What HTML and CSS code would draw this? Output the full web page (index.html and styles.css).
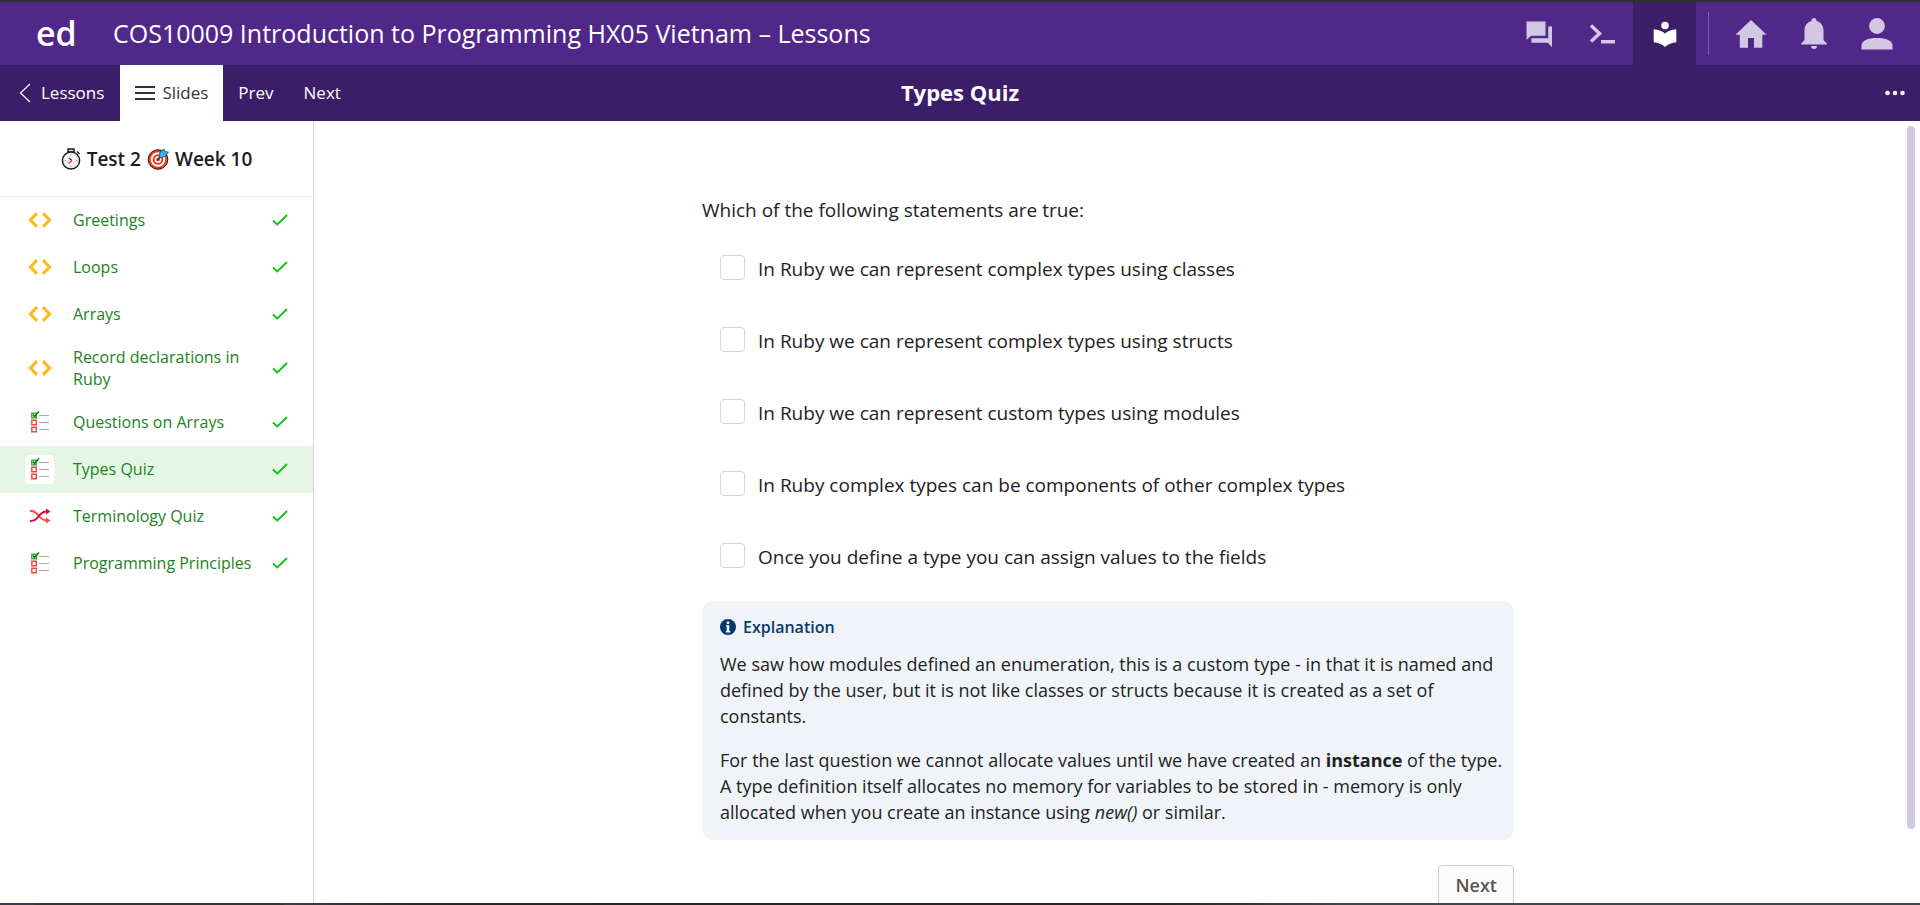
FILE: index.html
```html
<!DOCTYPE html>
<html lang="en">
<head>
<meta charset="utf-8">
<title>COS10009 Introduction to Programming HX05 Vietnam – Lessons</title>
<link rel="stylesheet" href="styles.css">
</head>
<body>
<svg width="0" height="0" class="defs" aria-hidden="true">
  <symbol id="code" viewBox="0 0 24 16"><path d="M9 1.200 2.500 8 9 14.800M15 1.200 21.500 8 15 14.800" fill="none" stroke="#fdbb1d" stroke-width="3.200"/></symbol>
  <symbol id="tick" viewBox="0 0 16 12"><path d="M1 6.500 5.300 10.500 15 1" fill="none" stroke="#0ac40a" stroke-width="1.800"/></symbol>
  <symbol id="quiz" viewBox="0 0 20 24">
    <path d="M1.800 3.300h4.500v4.500H1.800z" fill="none" stroke="#3fae3f" stroke-width="1.500"/>
    <path d="M3 4.500 4.500 6.500 9 1.500" fill="none" stroke="#0b7d12" stroke-width="1.500"/>
    <path d="M1.800 10.300h4.500v4.500H1.800zM1.800 17.300h4.500v4.500H1.800z" fill="none" stroke="#f04444" stroke-width="1.400"/>
    <path d="M9 5.500h10M9 12.500h10M9 19.500h10" stroke="#aaa9a2" stroke-width="1.200"/>
  </symbol>
  <symbol id="shuffle" viewBox="0 0 22 16">
    <path d="M1 3c4-.5 6 1 8.500 4.500S14 12.500 18 12.500" fill="none" stroke="#ff4a2a" stroke-width="1.900"/>
    <path d="m17 9.500 4.500 3L17 15.500z" fill="#ff4a2a"/>
    <path d="M1 13c4 .3 6-1 8.500-4.500S14 3.500 18 3.500" fill="none" stroke="#d3093f" stroke-width="1.900"/>
    <path d="m17 .5 4.500 3-4.500 3z" fill="#d3093f"/>
  </symbol>
</svg>
<div class="strip strip-top"></div>
<header class="topbar">
  <a class="logo" href="#">ed</a>
  <h1 class="course">COS10009 Introduction to Programming HX05 Vietnam – Lessons</h1>
  <nav class="apps" aria-label="Apps">
    <a class="app" href="#" aria-label="Discussion"><svg width="26" height="26" viewBox="1 1 24 24"><path d="M1.500 1.500h17.500v13H5.500l-4 4zM21.500 6H25v19l-4-4H6v-4h15.500z"/></svg></a>
    <a class="app" href="#" aria-label="Workspaces"><svg width="26" height="22" viewBox="0 0 26 22"><path d="m2 2.500 8.500 8L2 18.500" fill="none" stroke="#d3c8e3" stroke-width="3.400"/><path d="M12 17h14v3.500H12z"/></svg></a>
    <a class="app app-current" href="#" aria-label="Lessons"><svg width="24" height="26" viewBox="0 0 24 26"><circle cx="12" cy="4.500" r="3.800"/><path d="M12 12.500C9 10 5 8.500.7 8.300v13C5 21.800 9 23 12 26c3-3 7-4.200 11.300-4.700v-13C19 8.500 15 10 12 12.500z"/></svg></a>
    <span class="divider"></span>
    <a class="app" href="#" aria-label="Home"><svg width="32" height="28" viewBox="0 0 32 28"><path d="M16 0 .5 14.800h4.300v13H13V18h6v9.800h8.300v-13h4.200z"/></svg></a>
    <a class="app" href="#" aria-label="Notifications"><svg width="26" height="32" viewBox="0 0 26 32"><path d="M13 0a2.500 2.500 0 0 0-2.500 3C6 4 3.500 8 3.500 12.500V22L.3 25.300V26.500h25.400v-1.200L22.500 22v-9.500C22.500 8 20 4 15.500 3A2.500 2.500 0 0 0 13 0zM10 28h6a3 3 0 0 1-6 0z"/></svg></a>
    <a class="app" href="#" aria-label="Account"><svg width="32" height="32" viewBox="0 0 32 32"><circle cx="16" cy="8" r="7.900"/><path d="M.5 31.500v-4C.5 22.500 7 20 16 20s15.500 2.500 15.500 7.500v4z"/></svg></a>
  </nav>
</header>
<nav class="lessonbar" aria-label="Lesson">
  <div class="steps">
    <a class="step step-back" href="#"><svg width="12" height="20" viewBox="0 0 12 20"><path d="M11 1 1.500 10 11 19" fill="none" stroke="#fff" stroke-width="1.200"/></svg>Lessons</a>
    <button class="step step-open" type="button"><svg width="20" height="14" viewBox="0 0 20 14"><path d="M0 1h20M0 7h20M0 13h20" stroke="#333" stroke-width="1.800"/></svg>Slides</button>
    <a class="step" href="#">Prev</a>
    <a class="step" href="#">Next</a>
  </div>
  <h2 class="slide-title">Types Quiz</h2>
  <button class="more" type="button" aria-label="More"><svg width="20" height="6" viewBox="0 0 20 6"><circle cx="2.500" cy="3" r="2.300"/><circle cx="10" cy="3" r="2.300"/><circle cx="17.500" cy="3" r="2.300"/></svg></button>
</nav>
<div class="body">
  <aside class="sidebar">
    <h2 class="module">
      <svg width="20" height="22" viewBox="0 0 20 22"><path d="M7 1h6v3H7zM16 3.500l2.500 2.500" fill="#ddd" stroke="#222" stroke-width="1.500"/><circle cx="10" cy="12.500" r="8.600" fill="#f4f4f4" stroke="#1c1c1c" stroke-width="1.500"/><path d="M10 6v1.500M10 17.500V19M3.500 12.500H5M15 12.500h1.500" stroke="#aaa"/><path d="m8 10 3 2.500" stroke="#333" stroke-width="1.200"/><path d="m11 12.500-3.500 3" stroke="#e3342f" stroke-width="1.200"/></svg>
      <span>Test 2</span>
      <svg width="22" height="22" viewBox="0 0 22 22"><circle cx="11" cy="11.500" r="9.800" fill="#f03a17" stroke="#3a1712" stroke-width="1"/><circle cx="11" cy="11.500" r="6.300" fill="none" stroke="#fff" stroke-width="2"/><circle cx="11" cy="11.500" r="2.600" fill="none" stroke="#fff" stroke-width="1.500"/><path d="m10.500 12 6-6" stroke="#123b5c" stroke-width="1.400"/><path d="M12 10l1-6 4-3 .8 2.700 3.700.300-3.500 4.500z" fill="#35b5f1" stroke="#12415f" stroke-width=".8"/></svg>
      <span>Week 10</span>
    </h2>
    <ul class="slides">
      <li><a class="slide" href="#"><span class="badge"><svg width="24" height="16"><use href="#code"/></svg></span><span class="name">Greetings</span><svg width="16" height="12"><use href="#tick"/></svg></a></li>
      <li><a class="slide" href="#"><span class="badge"><svg width="24" height="16"><use href="#code"/></svg></span><span class="name">Loops</span><svg width="16" height="12"><use href="#tick"/></svg></a></li>
      <li><a class="slide" href="#"><span class="badge"><svg width="24" height="16"><use href="#code"/></svg></span><span class="name">Arrays</span><svg width="16" height="12"><use href="#tick"/></svg></a></li>
      <li><a class="slide" href="#"><span class="badge"><svg width="24" height="16"><use href="#code"/></svg></span><span class="name">Record declarations in Ruby</span><svg width="16" height="12"><use href="#tick"/></svg></a></li>
      <li><a class="slide" href="#"><span class="badge"><svg width="20" height="24"><use href="#quiz"/></svg></span><span class="name">Questions on Arrays</span><svg width="16" height="12"><use href="#tick"/></svg></a></li>
      <li><a class="slide slide-current" href="#" aria-current="page"><span class="badge"><svg width="20" height="24"><use href="#quiz"/></svg></span><span class="name">Types Quiz</span><svg width="16" height="12"><use href="#tick"/></svg></a></li>
      <li><a class="slide" href="#"><span class="badge"><svg width="22" height="16"><use href="#shuffle"/></svg></span><span class="name">Terminology Quiz</span><svg width="16" height="12"><use href="#tick"/></svg></a></li>
      <li><a class="slide" href="#"><span class="badge"><svg width="20" height="24"><use href="#quiz"/></svg></span><span class="name">Programming Principles</span><svg width="16" height="12"><use href="#tick"/></svg></a></li>
    </ul>
  </aside>
  <main class="main">
    <form class="quiz">
      <p class="question">Which of the following statements are true:</p>
      <div class="options">
        <label class="option"><input type="checkbox" name="a">In Ruby we can represent complex types using classes</label>
        <label class="option"><input type="checkbox" name="b">In Ruby we can represent complex types using structs</label>
        <label class="option"><input type="checkbox" name="c">In Ruby we can represent custom types using modules</label>
        <label class="option"><input type="checkbox" name="d">In Ruby complex types can be components of other complex types</label>
        <label class="option"><input type="checkbox" name="e">Once you define a type you can assign values to the fields</label>
      </div>
      <section class="explanation">
        <h3 class="explanation-title"><svg width="16" height="16" viewBox="0 0 16 16"><circle cx="8" cy="8" r="8" fill="#073a6b"/><circle cx="8" cy="3.800" r="1.400" fill="#fff"/><path d="M6 6.300h3.300v5.700h1v1.500H5.800V12h1V7.800H6z" fill="#fff"/></svg>Explanation</h3>
        <p>We saw how modules defined an enumeration, this is a custom type - in that it is named and defined by the user, but it is not like classes or structs because it is created as a set of constants.</p>
        <p>For the last question we cannot allocate values until we have created an <strong>instance</strong> of the type. A type definition itself allocates no memory for variables to be stored in - memory is only allocated when you create an instance using <em>new()</em> or similar.</p>
      </section>
      <button class="next" type="button">Next</button>
    </form>
  </main>
  <div class="track"><div class="thumb"></div></div>
</div>
<div class="strip strip-bottom"></div>
</body>
</html>
```
FILE: styles.css
```css
* { box-sizing: border-box; }

body {
  margin: 0;
  height: 100vh;
  display: flex;
  flex-direction: column;
  overflow: hidden;
  background: #fff;
  color: #222;
  font-family: "Open Sans", "Noto Sans", sans-serif;
  font-size: 18px;
  line-height: 26px;
}

h1, h2, h3, p, ul { margin: 0; padding: 0; }
ul { list-style: none; }
a { color: inherit; text-decoration: none; }
svg { display: block; flex: none; }
button { font: inherit; }
.defs { position: absolute; }

.strip { flex: none; height: 2px; background: #2d2f33; }
.strip-bottom { background: linear-gradient(to right, #3a3c49 35px, #383435 35px 284px, #3e3c48 284px, #2a2728 420px, #2a2422 60%, #40454f 70%); }

.topbar {
  flex: none;
  height: 63px;
  display: flex;
  align-items: center;
  background: #50288a;
  color: #fff;
}
.logo { width: 113px; padding: 0 0 2px 36px; font-size: 34px; line-height: 40px; font-weight: 600; }
.course { flex: 1; padding-bottom: 2px; font-size: 25px; line-height: 34px; font-weight: 400; }
.apps { display: flex; align-items: center; align-self: stretch; padding-right: 12px; }
.app { width: 63px; align-self: stretch; display: grid; place-items: center; fill: #d3c8e3; }
.app-current { background: #3c1d68; fill: #fff; }
.divider { width: 1px; height: 43px; margin: 0 10px 0 12px; background: #7e62a8; }

.lessonbar {
  flex: none;
  height: 56px;
  display: grid;
  grid-template-columns: 1fr auto 1fr;
  align-items: center;
  background: #3c1d68;
  color: #fff;
}
.steps { display: flex; align-self: stretch; }
.step { display: flex; align-items: center; padding: 0 15px; font-size: 17px; }
.step-back { gap: 10px; padding: 0 16px 0 19px; }
.step-open { gap: 7px; border: 0; background: #fff; color: #333; }
.slide-title { padding-bottom: 2px; font-size: 22px; line-height: 32px; font-weight: 700; }
.more { justify-self: end; margin-right: 15px; padding: 0; border: 0; background: none; fill: #fff; }

.body { flex: 1; min-height: 0; display: flex; }
.sidebar { flex: none; width: 314px; border-right: 1px solid #d9d9d9; }
.module {
  display: flex;
  align-items: center;
  justify-content: center;
  gap: 6px;
  height: 76px;
  border-bottom: 1px solid #ebebeb;
  color: #1c1c1c;
  font-size: 19px;
  font-weight: 600;
}
.slide {
  display: flex;
  align-items: center;
  min-height: 47px;
  padding: 8px 25px 9px;
  color: #1b8321;
  font-size: 16px;
  line-height: 22px;
}
.slide-current { background: #e5f7e4; }
.badge { width: 29px; height: 29px; margin-right: 19px; display: grid; place-items: center; border-radius: 4px; background: #fff; }
.name { flex: 1; }

.main { flex: 1; overflow: hidden; }
.quiz { display: flex; flex-direction: column; max-width: 812px; margin: 0 auto; padding-top: 76px; }
.question, .option { font-size: 19px; }
.options { display: flex; flex-direction: column; gap: 44px; padding: 32px 18px 30px; }
.option { display: flex; align-items: center; gap: 13px; }
.option input { appearance: none; width: 25px; height: 25px; margin: 0 0 3px; border: 1px solid #d6d6d6; border-radius: 4px; background: #fff; }

.explanation { display: flex; flex-direction: column; gap: 18px; padding: 14px 8px 15px 18px; border-radius: 12px; background: #f0f4f8; }
.explanation-title { display: flex; align-items: center; gap: 7px; margin-bottom: -6px; color: #073a6b; font-size: 16px; line-height: 24px; font-weight: 600; }
.next { align-self: flex-end; margin-top: 25px; padding: 6px 16px; border: 1px solid #ccc; border-radius: 4px; background: #fcfcfc; color: #555; font-size: 18px; font-weight: 600; }

.track { flex: none; width: 18px; padding: 5px; }
.thumb { width: 8px; height: 91%; border-radius: 4px; background: #d3c8e3; }
```
